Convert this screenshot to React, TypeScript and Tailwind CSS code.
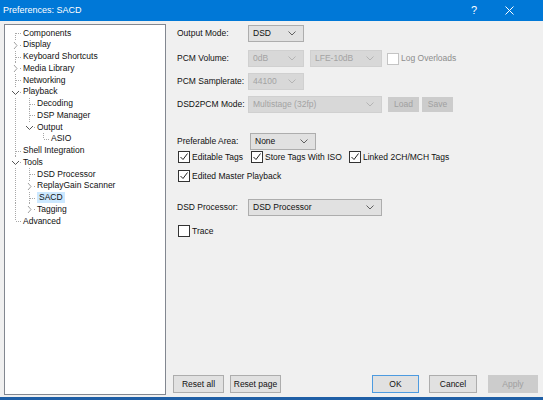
import React from 'react'

const FONT = { fontFamily: '"Liberation Sans", Arial, sans-serif' }

type Row = {
  label: string
  depth: number
  anc: boolean[]
  last?: boolean
  first?: boolean
  chevron?: 'open' | 'closed'
  selected?: boolean
}

const tree: Row[] = [
  { label: 'Components', depth: 0, anc: [], first: true },
  { label: 'Display', depth: 0, anc: [], chevron: 'closed' },
  { label: 'Keyboard Shortcuts', depth: 0, anc: [] },
  { label: 'Media Library', depth: 0, anc: [], chevron: 'closed' },
  { label: 'Networking', depth: 0, anc: [] },
  { label: 'Playback', depth: 0, anc: [], chevron: 'open' },
  { label: 'Decoding', depth: 1, anc: [true] },
  { label: 'DSP Manager', depth: 1, anc: [true] },
  { label: 'Output', depth: 1, anc: [true], last: true, chevron: 'open' },
  { label: 'ASIO', depth: 2, anc: [true, false], last: true },
  { label: 'Shell Integration', depth: 0, anc: [] },
  { label: 'Tools', depth: 0, anc: [], chevron: 'open' },
  { label: 'DSD Processor', depth: 1, anc: [true] },
  { label: 'ReplayGain Scanner', depth: 1, anc: [true], chevron: 'closed' },
  { label: 'SACD', depth: 1, anc: [true], selected: true },
  { label: 'Tagging', depth: 1, anc: [true], last: true, chevron: 'closed' },
  { label: 'Advanced', depth: 0, anc: [], last: true },
]

const H = 11.75
const MID = 6

function Connectors({ row }: { row: Row }) {
  const w = (row.depth + 1) * 14
  const c = row.depth * 14
  return (
    <svg width={w} height={H} viewBox={`0 0 ${w} ${H}`} className="shrink-0 overflow-visible">
      <g stroke="#a8a8a8" strokeWidth="1" strokeDasharray="1 1" fill="none">
        {row.anc.map((on, i) =>
          on ? <line key={i} x1={i * 14 + 7.5} y1={0} x2={i * 14 + 7.5} y2={H} /> : null
        )}
        <line x1={c + 7.5} y1={row.first ? MID : 0} x2={c + 7.5} y2={row.last ? MID : H} />
        <line x1={c + 8} y1={MID + 0.5} x2={c + 14} y2={MID + 0.5} />
      </g>
      {row.chevron && (
        <g>
          <rect x={c + 3} y={MID - 4} width={9} height={9} fill="#fff" />
          {row.chevron === 'closed' ? (
            <polyline points={`${c + 6},${MID - 3} ${c + 9},${MID + 0.5} ${c + 6},${MID + 4}`} stroke="#a0a0a0" strokeWidth="1" fill="none" />
          ) : (
            <polyline points={`${c + 4},${MID - 1} ${c + 7.5},${MID + 2.5} ${c + 11},${MID - 1}`} stroke="#555" strokeWidth="1" fill="none" />
          )}
        </g>
      )}
    </svg>
  )
}

function Chevron({ disabled }: { disabled?: boolean }) {
  return (
    <svg width="8" height="5" viewBox="0 0 8 5" className="shrink-0">
      <polyline points="0.5,0.5 4,4 7.5,0.5" stroke={disabled ? '#b4b4b4' : '#606060'} strokeWidth="1" fill="none" />
    </svg>
  )
}

function Select({ value, width, disabled }: { value: string; width: string; disabled?: boolean }) {
  return (
    <div
      className={
        'h-[17px] flex items-center justify-between pl-[4px] pr-[7px] border ' +
        width +
        (disabled ? ' bg-[#d8d8d8] border-[#d0d0d0] text-[#a3a3a3]' : ' bg-[#e1e1e1] border-[#adadad] text-[#111]')
      }
    >
      <span>{value}</span>
      <Chevron disabled={disabled} />
    </div>
  )
}

function Check({ checked, disabled, label }: { checked?: boolean; disabled?: boolean; label: string }) {
  return (
    <div className="flex items-center h-[12px]">
      <div
        className={
          'w-[12px] h-[12px] border bg-white flex items-center justify-center ' +
          (disabled ? 'border-[#c4c4c4]' : 'border-[#333]')
        }
      >
        {checked && (
          <svg width="10" height="10" viewBox="0 0 10 10">
            <polyline points="1.5,5 4,7.5 8.5,1.5" stroke="#222" strokeWidth="1" fill="none" />
          </svg>
        )}
      </div>
      <span className={'ml-[2px] ' + (disabled ? 'text-[#8d8d8d]' : 'text-[#111]')}>{label}</span>
    </div>
  )
}

function Button({ label, width, variant }: { label: string; width: string; variant?: 'default' | 'disabled' }) {
  const cls =
    variant === 'disabled'
      ? 'bg-[#cccccc] border-[#cccccc] text-[#a0a0a0]'
      : variant === 'default'
        ? 'bg-[#e1e1e1] border-[#4d9be0] text-[#111]'
        : 'bg-[#e1e1e1] border-[#adadad] text-[#111]'
  return (
    <div className={'h-[18px] flex items-center justify-center border ' + width + ' ' + cls}>{label}</div>
  )
}

export default function App() {
  return (
    <div className="w-[543px] h-[400px] bg-[#f0f0f0] flex flex-col text-[8.5px] leading-none overflow-hidden text-[#111]" style={FONT}>
      {/* Title bar */}
      <div className="h-[21px] bg-[#0078d7] flex items-center text-white shrink-0">
        <span className="ml-[3px] text-[9px]">Preferences: SACD</span>
        <span className="ml-auto text-[11px] mr-[28px]">?</span>
        <svg width="9" height="9" viewBox="0 0 9 9" className="mr-[29px]">
          <path d="M0.5 0.5 L8.5 8.5 M8.5 0.5 L0.5 8.5" stroke="#fff" strokeWidth="1" />
        </svg>
      </div>

      <div className="flex h-[376px] shrink-0">
        {/* Tree */}
        <div className="ml-[4px] mt-[3px] w-[162px] h-[371px] border border-[#828790] bg-white pt-[2px] pl-[3px] shrink-0">
          {tree.map((row) => (
            <div key={row.label} className="flex items-center h-[11.75px]">
              <Connectors row={row} />
              <span
                className={
                  'ml-[1px] ' + (row.selected ? 'bg-[#cce8ff] -ml-[1px] px-[2px] py-[1.5px]' : '')
                }
              >
                {row.label}
              </span>
            </div>
          ))}
        </div>

        {/* Settings */}
        <div className="flex-1 flex flex-col">
          <div className="pl-[11px] flex flex-col">
            <div className="mt-[4px] h-[17px] flex items-center">
              <span className="w-[71px]">Output Mode:</span>
              <Select value="DSD" width="w-[56px]" />
            </div>
            <div className="mt-[8px] h-[17px] flex items-center">
              <span className="w-[71px]">PCM Volume:</span>
              <Select value="0dB" width="w-[56px]" disabled />
              <div className="ml-[6px]">
                <Select value="LFE-10dB" width="w-[72px]" disabled />
              </div>
              <div className="ml-[5px]">
                <Check label="Log Overloads" disabled />
              </div>
            </div>
            <div className="mt-[6px] h-[17px] flex items-center">
              <span className="w-[71px]">PCM Samplerate:</span>
              <Select value="44100" width="w-[56px]" disabled />
            </div>
            <div className="mt-[6px] h-[17px] flex items-center">
              <span className="w-[71px]">DSD2PCM Mode:</span>
              <Select value="Multistage (32fp)" width="w-[134px]" disabled />
              <div className="ml-[6px] w-[31px] h-[15px] bg-[#cccccc] text-[#a0a0a0] flex items-center justify-center">Load</div>
              <div className="ml-[3px] w-[31px] h-[15px] bg-[#cccccc] text-[#a0a0a0] flex items-center justify-center">Save</div>
            </div>
            <div className="mt-[20px] h-[17px] flex items-center">
              <span className="w-[73px]">Preferable Area:</span>
              <Select value="None" width="w-[66px]" />
            </div>
            <div className="mt-[1px] h-[12px] flex items-center pl-[1px]">
              <div className="w-[73px]">
                <Check label="Editable Tags" checked />
              </div>
              <div className="w-[98px]">
                <Check label="Store Tags With ISO" checked />
              </div>
              <Check label="Linked 2CH/MCH Tags" checked />
            </div>
            <div className="mt-[7px] pl-[1px]">
              <Check label="Edited Master Playback" checked />
            </div>
            <div className="mt-[17px] h-[17px] flex items-center">
              <span className="w-[71px]">DSD Processor:</span>
              <Select value="DSD Processor" width="w-[134px]" />
            </div>
            <div className="mt-[9px] pl-[1px]">
              <Check label="Trace" />
            </div>
          </div>

          <div className="mt-auto mb-[4px] pl-[7px] pr-[5px] flex items-center">
            <Button label="Reset all" width="w-[51px]" />
            <div className="ml-[6px]">
              <Button label="Reset page" width="w-[51px]" />
            </div>
            <div className="ml-auto">
              <Button label="OK" width="w-[47px]" variant="default" />
            </div>
            <div className="ml-[10px]">
              <Button label="Cancel" width="w-[48px]" />
            </div>
            <div className="ml-[11px]">
              <Button label="Apply" width="w-[50px]" variant="disabled" />
            </div>
          </div>
        </div>
      </div>

      <div className="h-[3px] bg-[#1f5fa6] shrink-0" />
    </div>
  )
}
